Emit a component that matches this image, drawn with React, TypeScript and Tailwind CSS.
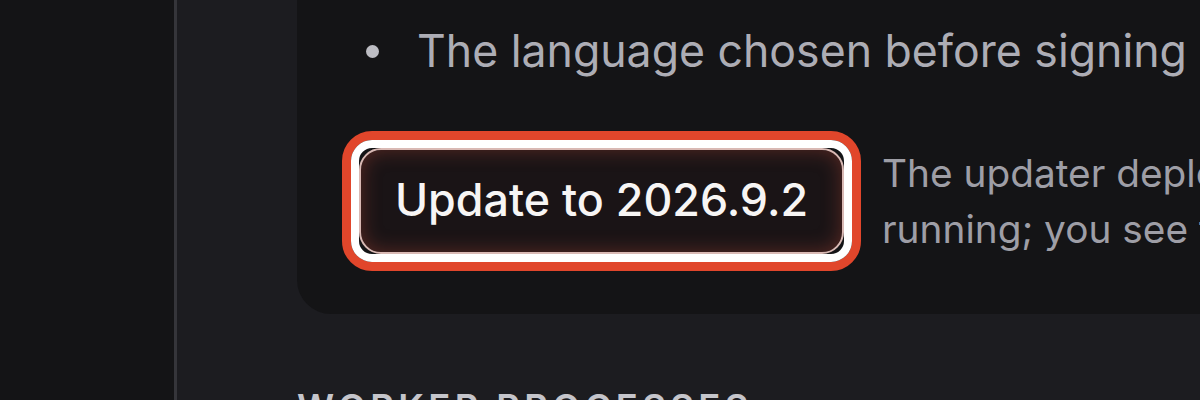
export default function App() {
  return (
    <div className="flex h-[400px] w-[1200px] overflow-hidden bg-[#1c1c20] font-['Inter',sans-serif]">
      {/* sidebar */}
      <aside className="h-full w-[177px] shrink-0 border-r-[3px] border-[#35353a] bg-[#141416]" />

      <main className="min-w-0 flex-1 pl-[120px]">
        <section className="-mt-[60px] w-[1100px] rounded-[34px] bg-[#141416] pb-[43px] pl-[45px] pt-[78px]">
          <ul>
            <li className="flex items-center gap-[38px] whitespace-nowrap pl-[24px] text-[44.6px] leading-[67px] text-[#adadb5]">
              <span className="h-[13px] w-[13px] shrink-0 rounded-full bg-[#bdbdc3]" />
              The language chosen before signing in stays active
            </li>
          </ul>

          <div className="mt-[46px] flex items-center gap-[21px]">
            <div className="shrink-0 rounded-[30px] border-[9px] border-[#e1462b]">
              <div className="rounded-[21px] border-[8px] border-white bg-[#141416]">
                <button className="flex h-[106px] w-[485px] items-center justify-center rounded-[22px] border-2 border-[#d9b9b4] bg-[#1a1416] text-[44.8px] font-medium text-[#f7f5f4] shadow-[inset_0_0_20px_rgba(210,80,60,0.35)]">
                  Update to 2026.9.2
                </button>
              </div>
            </div>
            <p className="whitespace-nowrap text-[38.8px] leading-[56px] text-[#9e9ea6]">
              The updater deploys the new build while this one keeps
              <br />
              running; you see the changelog once it is done.
            </p>
          </div>
        </section>

        <h2 className="mt-[67px] text-[36.4px] font-semibold uppercase leading-[54px] tracking-[0.12em] text-[#c5c5cb]">
          Worker processes
        </h2>
      </main>
    </div>
  );
}
